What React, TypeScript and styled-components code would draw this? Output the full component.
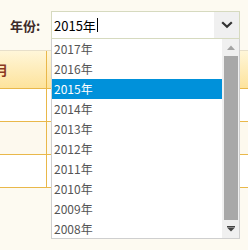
import * as React from 'react';
import styled, { createGlobalStyle } from 'styled-components';

const GlobalStyle = createGlobalStyle`
  html, body {
    margin: 0;
    padding: 0;
    background: #fdfaf1;
    font-family: "Noto Sans CJK SC", "Noto Sans", sans-serif;
  }
`;

const gold = '#e9b84a';

const Page = styled.div`
  width: 248px;
  height: 250px;
  overflow: hidden;
  position: relative;
`;

// filter bar
const FilterBar = styled.div`
  display: flex;
  align-items: center;
  height: 50px;
  padding-left: 10px;
  position: relative;
  z-index: 2;
`;

const Label = styled.label`
  width: 41px;
  font-size: 13px;
  font-weight: bold;
  color: #3d2a2a;
  line-height: 1;
`;

const SelectWrap = styled.div`
  position: relative;
  width: 189px;
`;

const SelectBox = styled.div`
  display: flex;
  height: 28px;
  box-sizing: border-box;
  border: 1px solid #d6dabf;
  background: #fff;
`;

const Value = styled.div`
  flex: 1;
  display: flex;
  align-items: center;
  padding-left: 2px;
  font-size: 13px;
  color: #000;
`;

const Caret = styled.span`
  display: inline-block;
  width: 1px;
  height: 14px;
  margin-left: 1px;
  background: #000;
`;

const Toggle = styled.div`
  width: 25px;
  display: flex;
  align-items: center;
  justify-content: center;
  background: #f0f0f0;
`;

const Menu = styled.div`
  position: absolute;
  top: 100%;
  left: 0;
  width: 189px;
  height: 200px;
  box-sizing: border-box;
  border: 1px solid #cfcfcf;
  border-top: none;
  background: #fff;
  display: flex;
`;

const List = styled.ul`
  flex: 1;
  margin: 0;
  padding: 0;
  list-style: none;
  overflow: hidden;
`;

const Item = styled.li<{ $active?: boolean }>`
  height: 20px;
  line-height: 20px;
  padding-left: 2px;
  font-size: 12px;
  color: ${(p) => (p.$active ? '#fff' : '#555')};
  background: ${(p) => (p.$active ? '#0091da' : 'transparent')};
`;

const ScrollBar = styled.div`
  width: 17px;
  background: #f0f0f0;
  display: flex;
  flex-direction: column;
`;

const ScrollBtn = styled.div<{ $h: number }>`
  height: ${(p) => p.$h}px;
  display: flex;
  align-items: center;
  justify-content: center;
`;

const Track = styled.div`
  flex: 1;
  padding: 0 1px 0 2px;
  display: flex;
`;

const Thumb = styled.div`
  flex: 1;
  background: #a8a8a8;
`;

// table
const Table = styled.div`
  display: grid;
  grid-template-columns: 47px 1fr;
  border-top: 1px solid #e7dfca;
`;

const HeadCell = styled.div<{ $first?: boolean }>`
  height: 38px;
  box-sizing: border-box;
  display: flex;
  align-items: center;
  overflow: hidden;
  background: linear-gradient(#fff6d9, #fde39c);
  border-bottom: 1px solid ${gold};
  border-right: ${(p) => (p.$first ? `1px solid ${gold}` : 'none')};
  font-size: 13px;
  font-weight: bold;
  color: #8a3a22;
`;

const HeadText = styled.span`
  margin-left: -5px;
`;

const Cell = styled.div<{ $first?: boolean; $alt?: boolean }>`
  height: 33px;
  box-sizing: border-box;
  background: ${(p) => (p.$alt ? '#fdf9ee' : '#fff')};
  border-bottom: 1px solid ${gold};
  border-right: ${(p) => (p.$first ? `1px solid ${gold}` : 'none')};
`;

const years = [2017, 2016, 2015, 2014, 2013, 2012, 2011, 2010, 2009, 2008];

export default function App() {
  return (
    <Page>
      <GlobalStyle />
      <FilterBar>
        <Label>年份:</Label>
        <SelectWrap>
          <SelectBox>
            <Value>
              2015年
              <Caret />
            </Value>
            <Toggle>
              <svg width="12" height="8" viewBox="0 0 12 8">
                <polyline points="1.2,1.2 6,5.8 10.8,1.2" fill="none" stroke="#333" strokeWidth="2.2" />
              </svg>
            </Toggle>
          </SelectBox>
          <Menu>
            <List>
              {years.map((y) => (
                <Item key={y} $active={y === 2015}>
                  {y}年
                </Item>
              ))}
            </List>
            <ScrollBar>
              <ScrollBtn $h={17}>
                <svg width="8" height="5" viewBox="0 0 8 5">
                  <polygon points="0,5 4,0.5 8,5" fill="#a3a3a3" />
                </svg>
              </ScrollBtn>
              <Track>
                <Thumb />
              </Track>
              <ScrollBtn $h={18}>
                <svg width="8" height="6" viewBox="0 0 8 6">
                  <rect x="0" y="0" width="8" height="1.2" fill="#444" />
                  <polygon points="0,1.5 8,1.5 4,5.5" fill="#444" />
                </svg>
              </ScrollBtn>
            </ScrollBar>
          </Menu>
        </SelectWrap>
      </FilterBar>
      <Table>
        <HeadCell $first>
          <HeadText>月</HeadText>
        </HeadCell>
        <HeadCell />
        <Cell $first />
        <Cell />
        <Cell $first $alt />
        <Cell $alt />
        <Cell $first />
        <Cell />
      </Table>
    </Page>
  );
}
